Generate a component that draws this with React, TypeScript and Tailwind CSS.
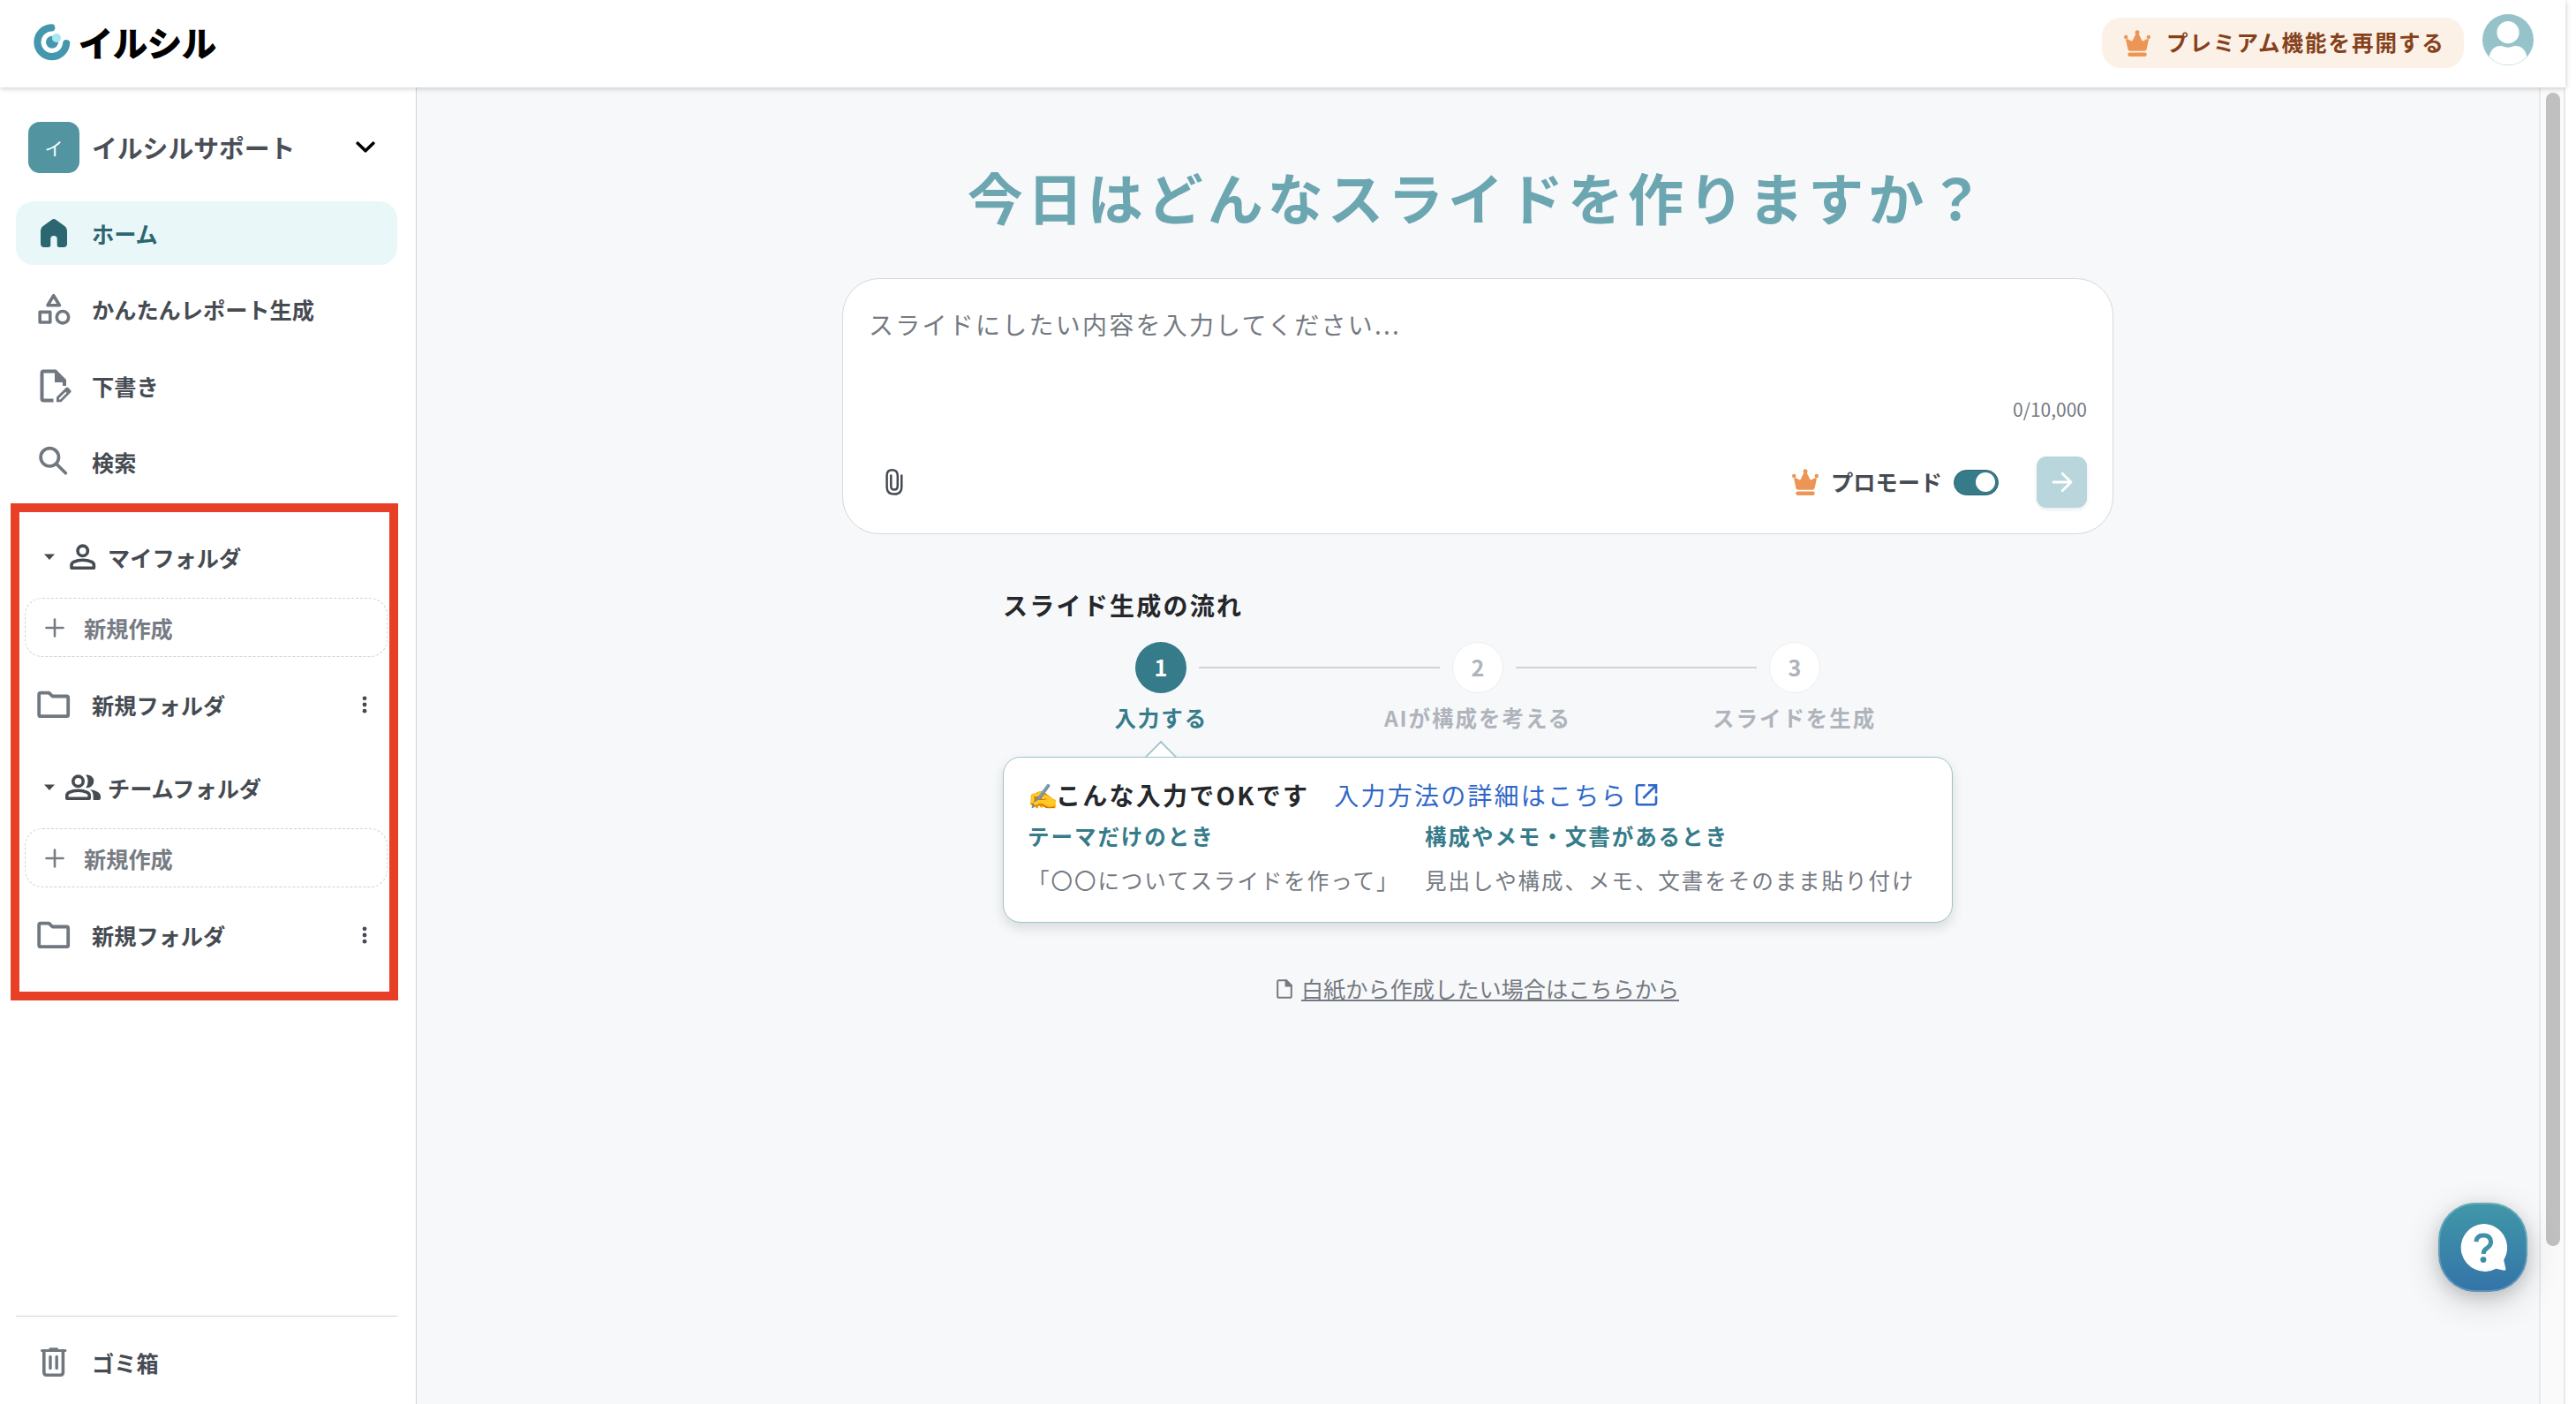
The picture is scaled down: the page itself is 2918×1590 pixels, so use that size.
import type { ReactNode } from "react";

function Crown() {
  return (
    <svg viewBox="0 0 30 30" className="h-[30px] w-[30px] shrink-0 fill-[#ec9554]">
      <path d="M4.5 10.2 8.3 12.6Q9.5 12.4 10 11.2L13.3 4.6H16.7L20 11.2Q20.5 12.4 21.7 12.6L25.5 10.2 28 10.5 25.7 21.5Q25.2 23.8 23 23.8H7Q4.8 23.8 4.3 21.5L2 10.5Z" />
      <circle cx="2.2" cy="8" r="2.2" />
      <circle cx="15" cy="2.7" r="2.5" />
      <circle cx="27.8" cy="8" r="2.2" />
      <rect x="4.3" y="25.6" width="21.4" height="4.3" rx="1.8" />
    </svg>
  );
}

function LogoMark() {
  return (
    <svg viewBox="0 0 42 42" className="h-[42px] w-[42px] shrink-0">
      <path d="M20.3 4.4A16.4 16.4 0 1 0 37.2 22" fill="none" stroke="#4497ad" strokeWidth="8.2" strokeLinecap="round" />
      <circle cx="21" cy="20.7" r="7" fill="#4497ad" />
      <circle cx="26" cy="16" r="5" fill="#a5e8f5" />
    </svg>
  );
}

function HomeIcon() {
  return (
    <svg viewBox="0 0 42 42" className="h-[42px] w-[42px] shrink-0 fill-[#2c6670]">
      <path d="M8.5 13.2Q6 15 6 18V33Q6 37 10 37H14.5Q17.3 37 17.3 34.5V27.5Q17.3 24 21 24T24.7 27.5V34.5Q24.7 37 27.5 37H32Q36 37 36 33V18Q36 15 33.5 13.2L23.5 6Q21 4.2 18.5 6Z" />
    </svg>
  );
}

function CategoryIcon() {
  return (
    <svg viewBox="0 0 42 42" className="h-[42px] w-[42px] shrink-0 fill-none stroke-[#717780]" strokeWidth="3.6" strokeLinejoin="round">
      <path d="M20.7 5.7 14 16.7H27.4Z" />
      <rect x="5.2" y="24.4" width="11.6" height="11.6" />
      <circle cx="31" cy="30.2" r="6.7" />
    </svg>
  );
}

function DraftIcon() {
  return (
    <svg viewBox="0 0 42 42" className="h-[42px] w-[42px] shrink-0 fill-[#717780]">
      <path d="M9.5 2.5H23.5L35 14V21H31V17H22V6.5H9.5V35.5H20.5V39.5H9.5Q5.5 39.5 5.5 35.5V6.5Q5.5 2.5 9.5 2.5Z" />
      <path fillRule="evenodd" d="M24 33.8 34.8 23.1Q36 22 37.2 23.1L40.2 26Q41.2 27.2 40.2 28.3L29.3 39.3H24ZM26.9 36.4H28.2L35.6 29 34.3 27.7 26.9 35.1Z" />
    </svg>
  );
}

function SearchIcon() {
  return (
    <svg viewBox="0 0 42 42" className="h-[42px] w-[42px] shrink-0 fill-none stroke-[#717780]" strokeWidth="3.7" strokeLinecap="round">
      <circle cx="16.3" cy="15.8" r="10.2" />
      <path d="M24 23.5 34.3 33.8" />
    </svg>
  );
}

function FolderIcon() {
  return (
    <svg viewBox="0 0 42 42" className="h-[42px] w-[42px] shrink-0 fill-none stroke-[#717780]" strokeWidth="3.8" strokeLinejoin="round">
      <path d="M6 7.6H15.5L19.4 11.5H35.6Q37.2 11.5 37.2 13.1V32.6Q37.2 34.2 35.6 34.2H5.8Q4.2 34.2 4.2 32.6V9.2Q4.2 7.6 6 7.6Z" />
    </svg>
  );
}

function TrashIcon() {
  return (
    <svg viewBox="0 0 42 42" className="h-[42px] w-[42px] shrink-0 fill-none stroke-[#717780]" strokeLinecap="round">
      <path d="M9.8 8.6V32Q9.8 35.2 12.8 35.2H28.4Q31.4 35.2 31.4 32V8.6" strokeWidth="3.6" />
      <path d="M7.5 7.4H33.9" strokeWidth="3" />
      <path d="M16.8 5.6H24.6" strokeWidth="2.6" />
      <path d="M17 14.5V27.5M24.2 14.5V27.5" strokeWidth="3.4" />
    </svg>
  );
}

function PersonIcon() {
  return (
    <svg viewBox="0 0 40 30" className="h-[30px] w-10 shrink-0 fill-none stroke-[#464b52]" strokeWidth="3.6">
      <circle cx="19.7" cy="7.8" r="5.7" />
      <path d="M7 27.2V24Q7 21.6 9.5 20.4Q14 18.3 19.7 18.3T30 20.4Q32.4 21.6 32.4 24V27.2Z" strokeLinejoin="round" />
    </svg>
  );
}

function GroupIcon() {
  return (
    <svg viewBox="0 0 40 30" className="h-[30px] w-10 shrink-0">
      <g className="fill-none stroke-[#464b52]" strokeWidth="3.6">
        <circle cx="14.5" cy="7.8" r="5.7" />
        <path d="M1.8 27.2V24Q1.8 21.6 4.3 20.4Q8.8 18.3 14.5 18.3T24.8 20.4Q27.2 21.6 27.2 24V27.2Z" strokeLinejoin="round" />
      </g>
      <path className="fill-[#464b52]" d="M23.2 0.6A7.4 7.4 0 1 1 23.2 15Q25.6 12 25.6 7.8T23.2.6ZM28 16.9Q40 19 40 24.5V27Q40 29 38 29H31.6V24Q31.6 20 28 16.9Z" />
    </svg>
  );
}

function NavItem({ icon, label, active }: { icon: ReactNode; label: string; active?: boolean }) {
  return (
    <div
      className={
        active
          ? "flex h-[72px] items-center gap-[22px] rounded-[20px] bg-[#e9f7f8] pl-[22px] font-bold text-[#2c6670]"
          : "flex h-[72px] items-center gap-[22px] rounded-[20px] pl-[22px] font-bold text-[#464b52]"
      }
    >
      {icon}
      <span>{label}</span>
    </div>
  );
}

function FolderGroup({ icon, label }: { icon: ReactNode; label: string }) {
  return (
    <div className="h-[261px]">
      <div className="flex h-[42px] items-center pl-8 font-bold text-[#464b52]">
        <svg viewBox="0 0 12 8" className="mr-3 h-2 w-3 fill-[#464b52]">
          <path d="M0 .5H12L6 7Z" />
        </svg>
        {icon}
        <span className="ml-2">{label}</span>
      </div>
      <div className="mt-[25px] mr-[11px] ml-[10px] flex h-[67px] items-center rounded-[20px] border border-dashed border-[#d0d3d7] pl-[22px] font-bold text-[#777c84]">
        <svg viewBox="0 0 22 22" className="mr-[22px] h-[22px] w-[22px] stroke-[#777c84]" strokeWidth="2.6" strokeLinecap="round">
          <path d="M11 1.5V20.5M1.5 11H20.5" />
        </svg>
        新規作成
      </div>
      <div className="mt-[33px] flex h-[42px] items-center gap-[22px] pr-[34px] pl-[22px] font-bold text-[#464b52]">
        <FolderIcon />
        <span className="flex-1">新規フォルダ</span>
        <svg viewBox="0 0 6 20" className="h-5 w-1.5 fill-[#464b52]">
          <circle cx="3" cy="2.8" r="2.4" />
          <circle cx="3" cy="10" r="2.4" />
          <circle cx="3" cy="17.2" r="2.4" />
        </svg>
      </div>
    </div>
  );
}

function Header() {
  return (
    <header className="relative z-10 flex h-[99px] w-[2906px] items-start justify-between bg-white pl-[38px] shadow-[0_1px_6px_rgba(0,0,0,0.22)]">
      <div className="flex pt-[27px]">
        <LogoMark />
        <span className="ml-[9px] h-[42px] text-[39px] leading-[40px] font-bold text-black [-webkit-text-stroke:1.2px_#000]">イルシル</span>
      </div>
      <div className="flex pr-9">
        <div className="mt-5 flex h-[57px] w-[410px] items-center rounded-[21px] bg-[#fcf1e7] pl-[25px] text-[24.5px] font-bold tracking-[1.96px] text-[#86411b]">
          <Crown />
          <span className="ml-[18px] whitespace-nowrap">プレミアム機能を再開する</span>
        </div>
        <svg viewBox="0 0 58 58" className="mt-4 ml-[21px] h-[58px] w-[58px]">
          <clipPath id="avatar">
            <circle cx="29" cy="29" r="28.6" />
          </clipPath>
          <circle cx="29" cy="29" r="29" fill="#96c3ca" />
          <g clipPath="url(#avatar)" fill="#fff">
            <circle cx="29" cy="20.7" r="12.6" />
            <path d="M7.5 60V50Q9 36.5 20.5 36H22Q29 39.5 36 36H37.5Q49 36.5 50.5 50V60Z" />
          </g>
        </svg>
      </div>
    </header>
  );
}

function Sidebar() {
  return (
    <aside className="relative flex w-[472px] shrink-0 flex-col border-r border-[#d2d5d9] bg-white px-[18px] pr-[21px] text-[25.2px] leading-[36px]">
      <div className="mt-[39px] flex h-[58px] items-center pl-[14px]">
        <div className="flex h-[58px] w-[58px] items-center justify-center rounded-[13px] bg-[#5295a1] text-[21px] text-white">イ</div>
        <span className="ml-[14px] flex-1 text-[28.8px] font-bold text-[#4a4e57]">イルシルサポート</span>
        <svg viewBox="0 0 22 14" className="mr-[25px] h-[14px] w-[22px] fill-none stroke-black" strokeWidth="3.6" strokeLinecap="round" strokeLinejoin="round">
          <path d="M2.2 2.2 11 10.8 19.8 2.2" />
        </svg>
      </div>
      <nav className="mt-8 flex flex-col gap-[14.4px]">
        <NavItem active icon={<HomeIcon />} label="ホーム" />
        <NavItem icon={<CategoryIcon />} label="かんたんレポート生成" />
        <NavItem icon={<DraftIcon />} label="下書き" />
        <NavItem icon={<SearchIcon />} label="検索" />
      </nav>
      <div className="mt-[51px]">
        <FolderGroup icon={<PersonIcon />} label="マイフォルダ" />
        <FolderGroup icon={<GroupIcon />} label="チームフォルダ" />
      </div>
      <div className="mt-auto border-t border-[#d2d5d9] pt-4 pb-[11px]">
        <NavItem icon={<TrashIcon />} label="ゴミ箱" />
      </div>
      <div className="pointer-events-none absolute top-[471px] left-[12px] h-[563px] w-[439px] border-[10px] border-[#e84026]" />
    </aside>
  );
}

function PromptBox() {
  return (
    <section className="flex h-[290px] w-[1440px] flex-col rounded-[42px] border border-[#d5d8db] bg-white pr-[29px] pl-[29px]">
      <div className="mt-[30px] h-[44px] text-[28px] leading-[42px] tracking-[2.24px] text-[#757a82]">スライドにしたい内容を入力してください...</div>
      <div className="mt-[57px] h-[32px] text-right text-[21px] leading-[32px] text-[#757a82]">0/10,000</div>
      <div className="mt-[38px] flex h-[58px] items-center">
        <svg viewBox="0 0 20 30" className="ml-[19px] h-[30px] w-5 fill-none stroke-[#464b52]" strokeWidth="2.5" strokeLinecap="round">
          <path d="M18.3 7.5V20.5Q18.3 28.6 10 28.6T1.6 20.5V7.5Q1.6 1.3 7.6 1.3T13.8 7.5V19.3Q13.8 23.6 10 23.6T6.3 19.3V7.5" />
        </svg>
        <div className="ml-auto">
          <Crown />
        </div>
        <span className="ml-[14px] text-[25.2px] font-bold text-[#464b52]">プロモード</span>
        <div className="ml-[13px] flex h-[29px] w-[51px] items-center justify-end rounded-full border border-[#2c6670] bg-[#367b8a] pr-[3px]">
          <div className="h-[22px] w-[22px] rounded-full bg-white" />
        </div>
        <div className="ml-[43px] flex h-[58px] w-[57px] items-center justify-center rounded-[11px] bg-[#b9d6dc] shadow-[0_2px_4px_rgba(0,0,0,0.08)]">
          <svg viewBox="0 0 24 24" className="h-6 w-6 fill-none stroke-white" strokeWidth="2.8" strokeLinecap="round" strokeLinejoin="round">
            <path d="M2 12H22M12.2 2.2 22 12 12.2 21.8" />
          </svg>
        </div>
      </div>
    </section>
  );
}

function Steps() {
  const off = "flex h-[58px] w-[58px] shrink-0 items-center justify-center rounded-full border border-[#eceef0] bg-white text-[25.2px] font-bold text-[#afb4bc]";
  const line = "mx-[14px] h-[2px] flex-1 bg-[#cfd3da]";
  return (
    <div className="w-[1076px]">
      <div className="flex items-center px-[150px]">
        <div className="flex h-[58px] w-[58px] shrink-0 items-center justify-center rounded-full bg-[#367b8a] text-[25.2px] font-bold text-white">1</div>
        <div className={line} />
        <div className={off}>2</div>
        <div className={line} />
        <div className={off}>3</div>
      </div>
      <div className="mt-[10px] grid h-[36px] grid-cols-3 text-center text-[24.5px] leading-[36px] font-bold tracking-[1.96px] text-[#afb4bc]">
        <span className="text-[#367b8a]">入力する</span>
        <span>AIが構成を考える</span>
        <span>スライドを生成</span>
      </div>
    </div>
  );
}

function TipCard() {
  return (
    <section className="relative h-[188px] w-[1076px] rounded-[20px] border border-[#9cc4c9] bg-white pt-[21px] pl-[27px] shadow-[0_6px_14px_rgba(0,0,0,0.12)]">
      <div className="absolute top-[-14px] left-[165px] h-[26px] w-[26px] rotate-45 border-t-2 border-l-2 border-[#9cc4c9] bg-white [clip-path:polygon(0_0,100%_0,0_100%)]" />
      <div className="flex h-[42px] items-center text-[28px] tracking-[2.24px]">
        <span className="flex font-bold text-[#25272b]">
          <span className="inline-block w-8">✍️</span>こんな入力でOKです
        </span>
        <span className="ml-7 text-[#2f67c9]">入力方法の詳細はこちら</span>
        <svg viewBox="0 0 26 26" className="ml-2 h-[26px] w-[26px] fill-none stroke-[#2f67c9]" strokeWidth="2.6">
          <path d="M11.5 2.3H4.3Q2 2.3 2 4.6V22Q2 24.3 4.3 24.3H21.7Q24 24.3 24 22V14.5M15 2.3H24V11.5M23.7 2.6 9.3 17" />
        </svg>
      </div>
      <div className="mt-2 grid grid-cols-[450px_1fr] gap-y-[14px] text-[24.5px] leading-[36px] tracking-[1.96px] text-[#757a82]">
        <span className="font-bold text-[#367b8a]">テーマだけのとき</span>
        <span className="font-bold text-[#367b8a]">構成やメモ・文書があるとき</span>
        <span>「〇〇についてスライドを作って」</span>
        <span>見出しや構成、メモ、文書をそのまま貼り付け</span>
      </div>
    </section>
  );
}

function HelpButton() {
  return (
    <div className="absolute top-[1362px] left-[2762px] z-20 flex h-[101px] w-[101px] items-center justify-center rounded-[42px] border-2 border-white/20 bg-linear-to-b from-[#4197a8] to-[#3474a8] bg-origin-border shadow-[0_10px_40px_rgba(0,0,0,0.16),0_6px_18px_rgba(0,0,0,0.14)]">
      <svg viewBox="0 0 54 54" className="h-[54px] w-[54px]">
        <path fill="#fff" d="M27 0A27 27 0 1 0 41.5 50.7L50.5 52.8Q52.8 53 52.3 50.5L50.2 41A27 27 0 0 0 27 0Z" />
        <path d="M18.8 20.3Q19.5 13 27.2 13T35.6 20.2Q35.6 24.5 31.5 27.2Q27.2 29.5 27.2 34" fill="none" stroke="#4090a8" strokeWidth="5" />
        <circle cx="27" cy="40.6" r="3.4" fill="#3d8ba8" />
      </svg>
    </div>
  );
}

export default function App() {
  return (
    <div lang="ja" className="relative h-[1590px] w-[2918px] overflow-hidden bg-white font-['Noto_Sans_CJK_JP',sans-serif]">
      <Header />
      <div className="flex h-[1491px]">
        <Sidebar />
        <main className="flex w-[2404px] flex-col items-center bg-[#f7f8fa]">
          <h1 className="mt-[76px] h-[94px] text-[63px] leading-[94px] font-bold tracking-[5.04px] text-[#6ca6b1]">今日はどんなスライドを作りますか？</h1>
          <div className="mt-[46px]">
            <PromptBox />
          </div>
          <div className="mt-[59px] w-[1076px]">
            <h2 className="h-[42px] text-[28px] leading-[42px] font-bold tracking-[2.24px] text-[#25272b]">スライド生成の流れ</h2>
            <div className="mt-[21px]">
              <Steps />
            </div>
            <div className="mt-[26px]">
              <TipCard />
            </div>
          </div>
          <div className="mt-[56px] flex h-[38px] items-center text-[25.2px] text-[#757a82]">
            <svg viewBox="0 0 18 22" className="mr-[10px] h-[22px] w-[18px] fill-none stroke-[#757a82]" strokeWidth="2">
              <path d="M2.6 1.2H11.2L16.8 6.8V19.2Q16.8 20.8 15.2 20.8H2.8Q1.2 20.8 1.2 19.2V2.8Q1.2 1.2 2.6 1.2Z" />
              <path d="M10.6 1.2V7.4H16.8Z" className="fill-[#757a82]" />
            </svg>
            <span className="border-b-2 border-[#757a82] leading-[26px]">白紙から作成したい場合はこちらから</span>
          </div>
        </main>
        <div className="w-[30px] border-x-2 border-[#e8e9ea] bg-[#fafafa] pt-1.5 pl-1.5">
          <div className="h-[1306px] w-4 rounded-full bg-[#c0c0c0]" />
        </div>
      </div>
      <HelpButton />
    </div>
  );
}
